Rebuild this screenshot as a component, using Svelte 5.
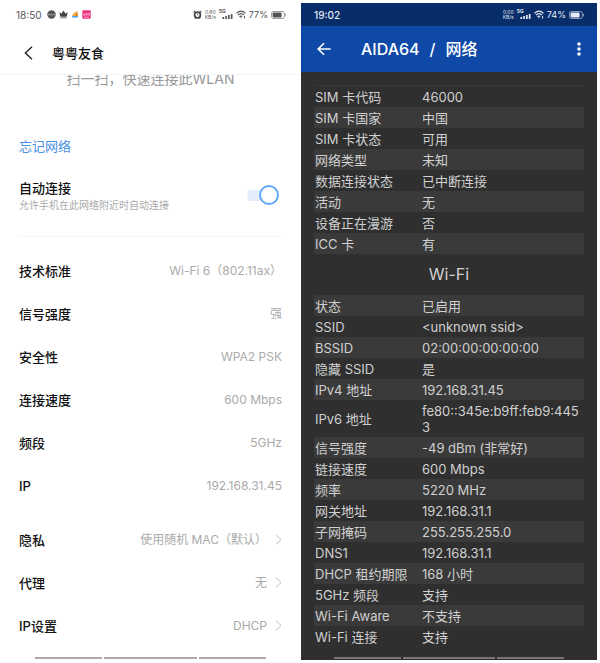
<script>
  let autoConnect = $state(true);

  const details = [
    ['技术标准', 'Wi-Fi 6（802.11ax）'],
    ['信号强度', '强'],
    ['安全性', 'WPA2 PSK'],
    ['连接速度', '600 Mbps'],
    ['频段', '5GHz'],
    ['IP', '192.168.31.45']
  ];
  const options = [
    ['隐私', '使用随机 MAC（默认）'],
    ['代理', '无'],
    ['IP设置', 'DHCP']
  ];
  const sim = [
    ['SIM 卡代码', '46000'],
    ['SIM 卡国家', '中国'],
    ['SIM 卡状态', '可用'],
    ['网络类型', '未知'],
    ['数据连接状态', '已中断连接'],
    ['活动', '无'],
    ['设备正在漫游', '否'],
    ['ICC 卡', '有']
  ];
  const wifi = [
    ['状态', '已启用'],
    ['SSID', '<unknown ssid>'],
    ['BSSID', '02:00:00:00:00:00'],
    ['隐藏 SSID', '是'],
    ['IPv4 地址', '192.168.31.45'],
    ['IPv6 地址', 'fe80::345e:b9ff:feb9:4453'],
    ['信号强度', '-49 dBm (非常好)'],
    ['链接速度', '600 Mbps'],
    ['频率', '5220 MHz'],
    ['网关地址', '192.168.31.1'],
    ['子网掩码', '255.255.255.0'],
    ['DNS1', '192.168.31.1'],
    ['DHCP 租约期限', '168 小时'],
    ['5GHz 频段', '支持'],
    ['Wi-Fi Aware', '不支持'],
    ['Wi-Fi 连接', '支持']
  ];
</script>

{#snippet indicators(speed, percent)}
  <span class="speed"><span>{speed}</span><span>KB/s</span></span>
  <span class="mobile">
    <span class="gen">5G</span>
    <svg width="14" height="9" viewBox="0 0 14 9" fill="currentColor" aria-hidden="true">
      <path d="M3.4 7h1.7v2H3.4zM6.2 6h1.7v3H6.2zM9 5h1.7v4H9zM11.8 4h1.7v5h-1.7z" />
    </svg>
  </span>
  <svg width="10" height="9" viewBox="0 0 10 9" fill="none" stroke="currentColor" stroke-width="1.2" aria-hidden="true">
    <path d="M.6 3.2Q5-1 9.4 3.2M2 5Q5 2.2 8 5M3.5 6.8Q5 5.4 6.2 6.6" />
    <circle cx="5" cy="7.8" r=".6" fill="currentColor" stroke="none" />
    <path d="M8.6 6v2.6" stroke-width="1" />
  </svg>
  <span class="percent">{percent}%</span>
  <svg width="15" height="8" viewBox="0 0 15 8" aria-hidden="true">
    <rect x=".5" y=".5" width="12.8" height="7" rx="1.8" fill="none" stroke="currentColor" stroke-width=".8" opacity=".7" />
    <rect x="1.6" y="1.6" width="9" height="4.8" rx=".8" fill="currentColor" />
    <path d="M14.5 2.8v2.4" stroke="currentColor" stroke-width=".8" opacity=".7" />
  </svg>
{/snippet}

{#snippet infoTable(rows, label)}
  <table aria-label={label}>
    <tbody>
      {#each rows as [name, value]}
        <tr><th scope="row">{name}</th><td>{value}</td></tr>
      {/each}
    </tbody>
  </table>
{/snippet}

<div class="screens">
  <section class="phone light">
    <div class="status">
      <span class="clock">18:50</span>
      <svg width="9" height="9" viewBox="0 0 9 9" aria-hidden="true">
        <circle cx="4.5" cy="4.5" r="4.2" fill="#555" />
        <path d="M1 5.2l1.2-1 1 1 1.2-1 1 1 1.2-1 1.2.8" fill="none" stroke="#ccc" stroke-width=".8" />
      </svg>
      <svg width="9" height="9" viewBox="0 0 9 9" fill="#444" aria-hidden="true">
        <path d="M.3 2l2.1 1.7L4.5.6l2.1 3.1L8.7 2l-1 4.8H1.3zM1.4 7.4h6.2v.9H1.4z" />
      </svg>
      <svg width="8" height="9" viewBox="0 0 8 9" aria-hidden="true">
        <path d="M1 6Q3 1.6 6.6 1.2V6z" fill="#f3ab3c" />
        <path d="M5 3.4h1.8V7H5z" fill="#e8743b" />
        <path d="M1 6h5.8v1.2Q4 8.2 1 7.2z" fill="#58a5e8" />
      </svg>
      <svg width="9" height="9" viewBox="0 0 9 9" aria-hidden="true">
        <rect x=".3" y=".3" width="8.4" height="8.4" rx="1" fill="#f0337e" />
        <path d="M1.6 3.4v2h1.3v-2M4 5.6V3.4h1.2v2M6.2 5.6V3.4h1.3v2.2M2 7.2h5" fill="none" stroke="#fbd" stroke-width=".7" />
      </svg>
      <span class="spacer"></span>
      <svg width="9" height="9" viewBox="0 0 9 9" fill="none" stroke="#444" aria-hidden="true">
        <circle cx="4.5" cy="5" r="2.9" stroke-width="1.7" />
        <path d="M.5 2.3L2.3.8M8.5 2.3L6.7.8M1.8 8.6l1-1M7.2 8.6l-1-1" stroke-width="1.1" />
        <path d="M4.5 3.6V5l1 .7" stroke-width=".7" />
      </svg>
      {@render indicators('0.60', 77)}
    </div>

    <header class="title">
      <button class="icon" aria-label="返回">
        <svg width="9" height="14" viewBox="0 0 9 14" fill="none" stroke="#222" stroke-width="1.4" aria-hidden="true">
          <path d="M8 .8L1.4 7 8 13.2" />
        </svg>
      </button>
      <h1>粤粤友食</h1>
    </header>

    <div class="scroll">
      <p class="scan">扫一扫，快速连接此WLAN</p>
      <button class="forget">忘记网络</button>
      <div class="auto">
        <label for="auto-connect">
          <span class="name">自动连接</span>
          <span class="hint">允许手机在此网络附近时自动连接</span>
        </label>
        <input id="auto-connect" type="checkbox" role="switch" bind:checked={autoConnect} />
      </div>
      <dl>
        {#each details as [name, value]}
          <div class="row"><dt>{name}</dt><dd>{value}</dd></div>
        {/each}
      </dl>
      <div class="options">
        {#each options as [name, value]}
          <button class="row">
            <span class="name">{name}</span>
            <span class="value">{value}
              <svg width="7" height="11" viewBox="0 0 7 11" fill="none" stroke="#bbb" aria-hidden="true">
                <path d="M.8.6l5.2 4.9L.8 10.4" />
              </svg>
            </span>
          </button>
        {/each}
      </div>
    </div>
    <div class="gesture"><i></i><i></i><i></i></div>
  </section>

  <section class="phone dark">
    <div class="status">
      <span class="clock">19:02</span>
      <span class="spacer"></span>
      {@render indicators('0.00', 74)}
    </div>
    <header class="title">
      <button class="icon" aria-label="返回">
        <svg width="14" height="14" viewBox="0 0 14 14" fill="none" stroke="#fff" stroke-width="1.6" aria-hidden="true">
          <path d="M13.6 7H1.6M7 1.2L1.2 7 7 12.8" />
        </svg>
      </button>
      <h1><span>AIDA64</span><span>/</span><span>网络</span></h1>
      <button class="icon" aria-label="更多">
        <svg width="4" height="14" viewBox="0 0 4 14" fill="#fff" aria-hidden="true">
          <circle cx="2" cy="2" r="1.8" /><circle cx="2" cy="7" r="1.8" /><circle cx="2" cy="12" r="1.8" />
        </svg>
      </button>
    </header>
    <div class="info">
      {@render infoTable(sim, 'SIM')}
      <h2>Wi-Fi</h2>
      {@render infoTable(wifi, 'Wi-Fi')}
    </div>
    <div class="gesture"><i></i><i></i><i></i></div>
  </section>
</div>

<style>
  :global(body) {
    background: #fff;
  }
  .screens {
    display: flex;
    min-height: 100vh;
    padding-right: 3px;
    box-sizing: border-box;
    font-family: Inter, 'Noto Sans CJK SC', sans-serif;
    font-size: 13px;
    line-height: 20px;
  }
  .phone {
    display: flex;
    flex-direction: column;
    min-width: 0;
    box-sizing: border-box;
  }
  .light {
    flex: 301;
    color: #111;
  }
  .dark {
    flex: 296;
    margin: 3px 0;
    background: #2f2f2f;
    color: #d0d0d0;
  }
  h1,
  h2,
  p,
  dl,
  dd {
    margin: 0;
  }
  button {
    padding: 0;
    border: 0;
    background: none;
    font: inherit;
    color: inherit;
    cursor: pointer;
  }
  svg {
    display: block;
    flex: none;
  }

  .status {
    display: flex;
    align-items: center;
    gap: 3px;
    font-size: 10px;
    line-height: 12px;
  }
  .light .status {
    height: 29px;
    padding: 0 15px 0 16px;
    color: #555;
  }
  .dark .status {
    height: 23px;
    padding: 0 13px;
    background: #082d6b;
    color: #e6ebf5;
  }
  .dark .clock {
    font-weight: 500;
  }
  .light .clock {
    margin-right: 2px;
  }
  .spacer {
    flex: 1;
  }
  .speed {
    display: flex;
    flex-direction: column;
    font-size: 5px;
    line-height: 5px;
    text-align: center;
  }
  .mobile {
    position: relative;
  }
  .gen {
    position: absolute;
    left: 0;
    top: -1px;
    font-size: 5px;
    font-weight: 700;
    line-height: 5px;
  }
  .percent {
    font-size: 9px;
  }

  .title {
    display: flex;
    align-items: center;
    box-sizing: border-box;
    height: 46px;
  }
  .light .title {
    gap: 19px;
    padding: 3px 24px 0;
    border-bottom: 1px solid #f3f3f3;
  }
  .light h1 {
    font-size: 13px;
    font-weight: 500;
  }
  .dark .title {
    padding: 0 16px;
    background: #0f49a8;
    color: #fff;
  }
  .dark h1 {
    display: flex;
    flex: 1;
    gap: 10px;
    margin-left: 30px;
    font-size: 16px;
    font-weight: 500;
  }

  .scroll {
    overflow: hidden;
    padding: 0 19px;
  }
  .scan {
    margin: -6px 0 47px;
    font-size: 14px;
    color: #999;
    text-align: center;
  }
  .forget {
    display: block;
    color: #4a90e2;
  }
  .auto {
    display: flex;
    align-items: center;
    justify-content: space-between;
    padding: 22px 3px 24px 0;
    border-bottom: 1px solid #f5f5f5;
  }
  .auto label {
    display: flex;
    flex-direction: column;
  }
  .name,
  dt {
    font-weight: 500;
  }
  .hint {
    font-size: 10px;
    line-height: 14px;
    color: #aaa;
  }
  input {
    display: flex;
    align-items: center;
    appearance: none;
    width: 32px;
    height: 20px;
    margin: 0;
    background: linear-gradient(#e3edfc, #e3edfc) 0 center / 28px 11px no-repeat;
    border-radius: 10px;
    cursor: pointer;
  }
  input::before {
    content: '';
    box-sizing: border-box;
    width: 20px;
    height: 20px;
    border: 2px solid #9bc0f0;
    border-radius: 50%;
    background: #fff;
  }
  input:checked {
    justify-content: flex-end;
  }
  input:checked::before {
    border-color: #62a8f8;
  }
  dl {
    padding-top: 12px;
  }
  .row {
    display: flex;
    align-items: center;
    justify-content: space-between;
    width: 100%;
    height: 43px;
  }
  dd,
  .value {
    display: flex;
    align-items: center;
    gap: 8px;
    font-size: 12px;
    color: #aaa;
  }
  .options {
    padding-top: 11px;
  }

  .info {
    padding: 13px 13px 0;
  }
  table {
    width: 100%;
    border-collapse: collapse;
    table-layout: fixed;
    line-height: 16px;
  }
  th,
  td {
    box-sizing: border-box;
    height: 21px;
    padding: 3px 0 2px;
    text-align: left;
    font-weight: 400;
    word-break: break-all;
  }
  th {
    width: 108px;
    padding-left: 1px;
    white-space: nowrap;
  }
  table:first-child {
    border-top: 1px solid #383838;
  }
  table:first-child tr:nth-child(even),
  h2 + table tr:nth-child(odd) {
    background: #3a3a3a;
  }
  h2 {
    font-size: 16px;
    font-weight: 400;
    line-height: 41px;
    text-align: center;
  }

  .gesture {
    display: flex;
    gap: 2px;
    height: 2px;
    margin-top: auto;
    padding: 0 35px;
  }
  .light .gesture {
    margin-bottom: 4px;
  }
  .dark .gesture {
    padding: 0 33px;
    margin-bottom: 1px;
  }
  .gesture i {
    flex: 67;
    background: #aaa;
  }
  .gesture i:nth-child(2) {
    flex: 93;
  }
  .dark .gesture i {
    background: #777;
  }
</style>
